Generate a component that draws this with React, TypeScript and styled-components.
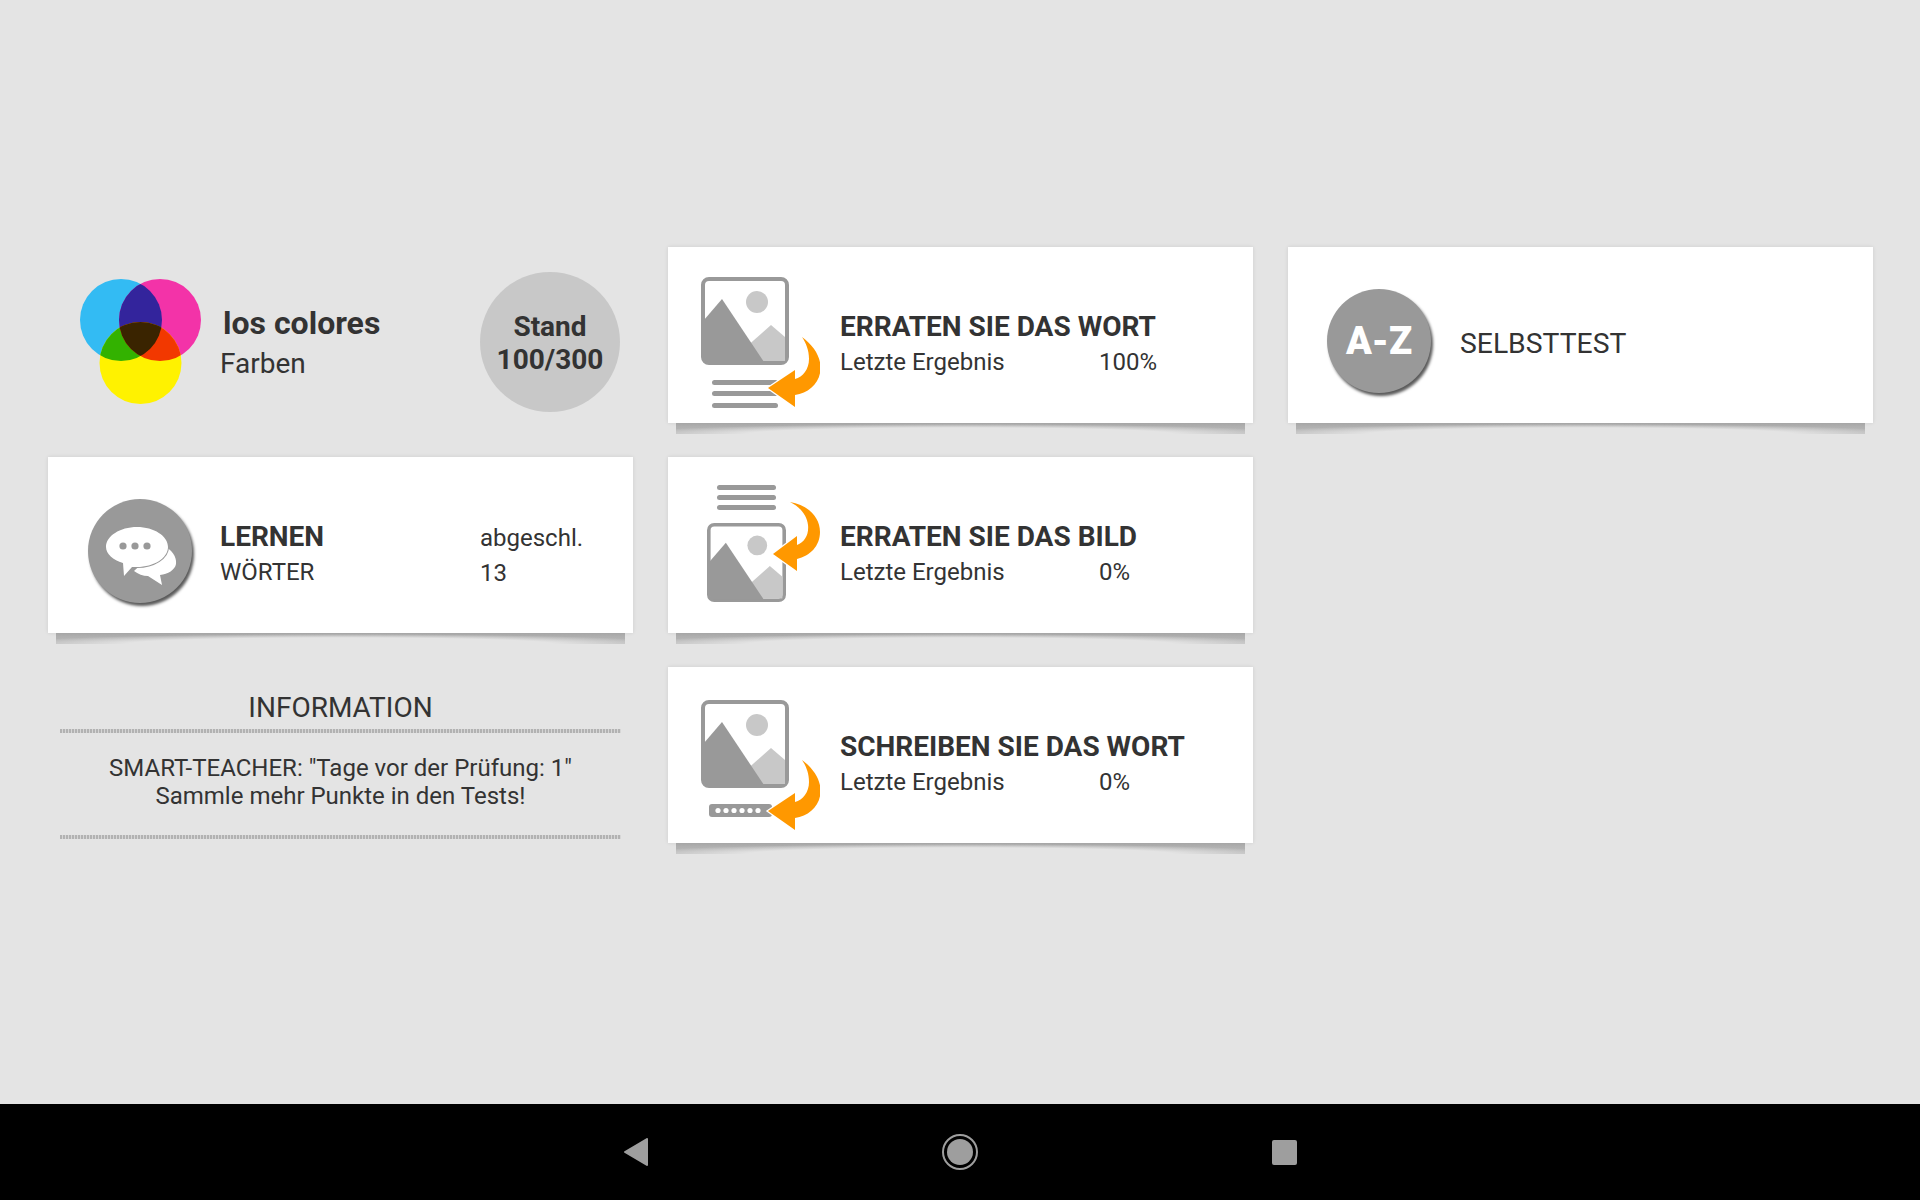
import styled, { createGlobalStyle } from "styled-components";

const GlobalStyle = createGlobalStyle`
  html {
    background: #e4e4e4;
  }
  body {
    margin: 0;
    padding: 0;
    font-family: Roboto, "Liberation Sans", sans-serif;
    color: #333;
  }
`;

const Screen = styled.div`
  width: 1920px;
  height: 1200px;
  display: flex;
  flex-direction: column;
  overflow: hidden;
`;

const Content = styled.main`
  flex: 1;
  padding: 247px 47px 0 48px;
  display: grid;
  grid-template-columns: repeat(3, 585px);
  column-gap: 35px;
  align-items: start;
`;

const Column = styled.div`
  display: flex;
  flex-direction: column;
  gap: 34px;
`;

const Header = styled.div`
  height: 176px;
  flex: none;
  display: flex;
  align-items: center;
`;

const Card = styled.div`
  height: 176px;
  flex: none;
  background: #fff;
  display: flex;
  align-items: center;
  position: relative;
  box-shadow: 0 0 4px rgba(0, 0, 0, 0.1);

  &::after {
    content: "";
    position: absolute;
    z-index: -1;
    left: 8px;
    right: 8px;
    top: calc(100% - 2px);
    height: 13px;
    filter: blur(0.7px);
    background:
      radial-gradient(ellipse 60% 10px at 50% 100%, #e4e4e4 0, #e4e4e4 62%, rgba(228, 228, 228, 0) 100%),
      linear-gradient(#adadad, #b4b4b4);
  }
`;

const ColorsWrap = styled.div`
  margin: 13px 0 0 32px;
  width: 122px;
  height: 125px;
  flex: none;
  svg { display: block; }
`;

const HeaderText = styled.div`
  margin: 17px 0 0 18px;
  width: 260px;
`;

const Subject = styled.div`
  font-size: 32px;
  font-weight: 700;
  line-height: 40px;
  margin-left: 3px;
`;

const SubjectSub = styled.div`
  font-size: 28px;
  line-height: 41px;
`;

const Score = styled.div`
  width: 140px;
  height: 140px;
  border-radius: 50%;
  background: #c8c8c8;
  flex: none;
  display: flex;
  align-items: center;
  justify-content: center;
  text-align: center;
  font-size: 28px;
  font-weight: 700;
  line-height: 33px;
  margin-top: 13px;
  padding-top: 2px;
  box-sizing: border-box;
`;

const RoundIcon = styled.div<{ $left: number }>`
  width: 104px;
  height: 104px;
  border-radius: 50%;
  background: #999;
  box-shadow: 2px 3px 3px rgba(0, 0, 0, 0.65);
  flex: none;
  display: flex;
  align-items: center;
  justify-content: center;
  margin: 11px 0 0 ${(p) => p.$left}px;
  color: #fff;
  font-size: 38px;
  font-weight: 900;
  svg { display: block; }
`;

const LearnText = styled.div`
  margin: 19px 0 0 28px;
  width: 260px;
`;

const Title = styled.div`
  font-size: 28px;
  font-weight: 700;
  line-height: 36px;
  white-space: nowrap;
`;

const Sub = styled.div`
  font-size: 24px;
  line-height: 35px;
  white-space: nowrap;
`;

const Progress = styled.div`
  margin-top: 21px;
`;

const SelfTest = styled.div`
  font-size: 28.3px;
  margin: 16px 0 0 29px;
`;

const IconSlot = styled.div`
  width: 130px;
  flex: none;
  margin-left: 22px;
  svg { display: block; }
`;

const ResultBody = styled.div`
  margin: 19px 0 0 20px;
`;

const ResultRow = styled.div`
  display: flex;
  font-size: 24px;
  line-height: 35px;
`;

const ResultLabel = styled.span`
  width: 259px;
`;

const Info = styled.section`
  padding: 0 12px;
  text-align: center;
  margin-top: 23px;
`;

const InfoTitle = styled.div`
  font-size: 28px;
  line-height: 36px;
  padding-bottom: 3px;
`;

const InfoBody = styled.div`
  font-size: 24px;
  line-height: 28px;
  padding: 21px 0 25px;
`;

const DottedRule = styled.div`
  height: 4px;
  background: repeating-linear-gradient(90deg, #b2b2b2 0 2px, #d6d6d6 2px 3px);
`;

const NavBar = styled.nav`
  height: 96px;
  flex: none;
  background: #000;
  display: flex;
  align-items: center;
  justify-content: center;
  gap: 294px;
  svg { display: block; }
`;

// picture symbol: frame, sun and two hills, drawn on an 88 unit square
const Picture = ({ x, y, size }: { x: number; y: number; size: number }) => (
  <g transform={`translate(${x} ${y}) scale(${size / 88})`}>
    <rect x="2" y="2" width="84" height="84" rx="6" fill="#fff" stroke="#999" strokeWidth="4" />
    <circle cx="56" cy="25" r="11" fill="#c8c8c8" />
    <path d="M44 71 L70 48 L84 60 V84 H50z" fill="#c8c8c8" />
    <path d="M3 43 L21 22 L63 85 H8 a5 5 0 0 1-5-5z" fill="#999" />
  </g>
);

const WordArrow = ({ x, y }: { x: number; y: number }) => (
  <path
    transform={`translate(${x} ${y})`}
    d="M34 0 C46 9 53 20 52.5 32 C52 46 41 56 27 58 L27 70 L0 51 L27 33 L27 42 C35 40 41 32 41 22 C41 13 38 6 34 0z"
    fill="#ff9800"
    stroke="#fff"
    strokeWidth="2.5"
    paintOrder="stroke"
  />
);

const ImageArrow = ({ x, y }: { x: number; y: number }) => (
  <path
    transform={`translate(${x} ${y})`}
    d="M17 0 C35 3 47 15 47 30 C47 44 37 54 24 57 L24 69 L0 52 L24 34 L24 43 C32 40 36 32 35 23 C34 13 27 5 17 0z"
    fill="#ff9800"
    stroke="#fff"
    strokeWidth="2.5"
    paintOrder="stroke"
  />
);

const Lines = ({ x, w, ys }: { x: number; w: number; ys: number[] }) => (
  <g fill="#999">
    {ys.map((y) => (
      <rect key={y} x={x} y={y} width={w} height="5" rx="2.5" />
    ))}
  </g>
);

const WordIcon = () => (
  <svg width="130" height="150" viewBox="0 0 130 150">
    <Picture x={11} y={17} size={88} />
    <Lines x={22} w={66} ys={[120, 131, 143]} />
    <WordArrow x={78} y={77} />
  </svg>
);

const ImageIcon = () => (
  <svg width="130" height="150" viewBox="0 0 130 150">
    <Lines x={27} w={59} ys={[15, 25, 35]} />
    <Picture x={17} y={53} size={79} />
    <ImageArrow x={83} y={32} />
  </svg>
);

const WriteIcon = () => (
  <svg width="130" height="150" viewBox="0 0 130 150">
    <Picture x={11} y={20} size={88} />
    <rect x="19" y="124" width="63" height="13" rx="3" fill="#999" />
    <g fill="#fff">
      {[28, 36, 44, 52, 60, 68].map((cx) => (
        <circle key={cx} cx={cx} cy="130.5" r="2.6" />
      ))}
    </g>
    <WordArrow x={78} y={80} />
  </svg>
);

const ChatIcon = () => (
  <svg width="104" height="104" viewBox="0 0 104 104">
    <path
      d="M74 46 C84 50 89 58 88 65 C87 71 80 75 72 76 L74 86 L60 77 C55 77 50 75 46 72z"
      fill="#fff"
    />
    <path
      d="M49 28 C66 28 80 37 80 48 C80 59 66 68 49 68 C47 68 46 68 44 68 L36 77 L35 64 C25 61 18 55 18 48 C18 37 32 28 49 28z"
      fill="#fff"
      stroke="#999"
      strokeWidth="2"
      paintOrder="stroke"
    />
    <g fill="#999">
      <circle cx="35" cy="47" r="3.6" />
      <circle cx="47" cy="47" r="3.6" />
      <circle cx="59" cy="47" r="3.6" />
    </g>
  </svg>
);

const Venn = () => (
  <svg width="122" height="125" viewBox="0 0 122 125">
    <defs>
      <clipPath id="blue"><circle cx="41" cy="41" r="41" /></clipPath>
      <clipPath id="magenta"><circle cx="80" cy="41" r="41" /></clipPath>
    </defs>
    <circle cx="41" cy="41" r="41" fill="#33bbf3" />
    <circle cx="80" cy="41" r="41" fill="#f333a8" />
    <circle cx="60.5" cy="84" r="41" fill="#fff200" />
    <circle cx="80" cy="41" r="41" fill="#33249c" clipPath="url(#blue)" />
    <circle cx="60.5" cy="84" r="41" fill="#33b200" clipPath="url(#blue)" />
    <circle cx="60.5" cy="84" r="41" fill="#f23800" clipPath="url(#magenta)" />
    <g clipPath="url(#blue)">
      <circle cx="60.5" cy="84" r="41" fill="#3a2400" clipPath="url(#magenta)" />
    </g>
  </svg>
);

const results = [
  { title: "ERRATEN SIE DAS WORT", value: "100%", icon: <WordIcon /> },
  { title: "ERRATEN SIE DAS BILD", value: "0%", icon: <ImageIcon /> },
  { title: "SCHREIBEN SIE DAS WORT", value: "0%", icon: <WriteIcon /> },
];

export default function App() {
  return (
    <Screen>
      <GlobalStyle />
      <Content>
        <Column>
          <Header>
            <ColorsWrap>
              <Venn />
            </ColorsWrap>
            <HeaderText>
              <Subject>los colores</Subject>
              <SubjectSub>Farben</SubjectSub>
            </HeaderText>
            <Score>
              <div>
                Stand
                <br />
                100/300
              </div>
            </Score>
          </Header>
          <Card>
            <RoundIcon $left={40}>
              <ChatIcon />
            </RoundIcon>
            <LearnText>
              <Title>LERNEN</Title>
              <Sub>WÖRTER</Sub>
            </LearnText>
            <Progress>
              <Sub>abgeschl.</Sub>
              <Sub>13</Sub>
            </Progress>
          </Card>
          <Info>
            <InfoTitle>INFORMATION</InfoTitle>
            <DottedRule />
            <InfoBody>
              SMART-TEACHER: "Tage vor der Prüfung: 1"
              <br />
              Sammle mehr Punkte in den Tests!
            </InfoBody>
            <DottedRule />
          </Info>
        </Column>
        <Column>
          {results.map((r) => (
            <Card key={r.title}>
              <IconSlot>{r.icon}</IconSlot>
              <ResultBody>
                <Title>{r.title}</Title>
                <ResultRow>
                  <ResultLabel>Letzte Ergebnis</ResultLabel>
                  <span>{r.value}</span>
                </ResultRow>
              </ResultBody>
            </Card>
          ))}
        </Column>
        <Column>
          <Card>
            <RoundIcon $left={39}>A-Z</RoundIcon>
            <SelfTest>SELBSTTEST</SelfTest>
          </Card>
        </Column>
      </Content>
      <NavBar>
        <svg width="24" height="28" viewBox="0 0 24 28">
          <path d="M23 1 L23 27 L1 14z" fill="#9e9e9e" stroke="#9e9e9e" strokeWidth="2" strokeLinejoin="round" />
        </svg>
        <svg width="36" height="36" viewBox="0 0 36 36">
          <circle cx="18" cy="18" r="17" fill="none" stroke="#9e9e9e" strokeWidth="2" />
          <circle cx="18" cy="18" r="13" fill="#9e9e9e" />
        </svg>
        <svg width="25" height="25" viewBox="0 0 25 25">
          <rect width="25" height="25" rx="2" fill="#9e9e9e" />
        </svg>
      </NavBar>
    </Screen>
  );
}
